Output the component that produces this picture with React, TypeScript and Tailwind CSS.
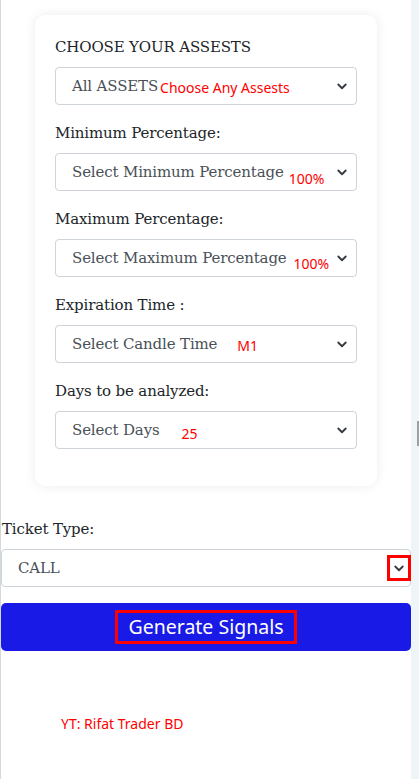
import React from 'react';

type Field = { label: string; value: string; note: string; noteClass: string };

const fields: Field[] = [
    { label: 'CHOOSE YOUR ASSESTS', value: 'All ASSETS', note: 'Choose Any Assests', noteClass: 'ml-[2px] translate-y-[1px]' },
    { label: 'Minimum Percentage:', value: 'Select Minimum Percentage', note: '100%', noteClass: 'ml-[5px] translate-y-[6px]' },
    { label: 'Maximum Percentage:', value: 'Select Maximum Percentage', note: '100%', noteClass: 'ml-[7px] translate-y-[5px]' },
    { label: 'Expiration Time :', value: 'Select Candle Time', note: 'M1', noteClass: 'ml-[20px] translate-y-[1px]' },
    { label: 'Days to be analyzed:', value: 'Select Days', note: '25', noteClass: 'ml-[22px] translate-y-[3px]' },
];

const Chevron: React.FC = () => (
    <svg width="12" height="12" viewBox="0 0 16 16" fill="none" stroke="#343a40" strokeWidth="2.4" strokeLinecap="round" strokeLinejoin="round">
        <path d="M3 6l5 5 5-5" />
    </svg>
);

const SelectBox: React.FC<{ value: string; note?: string; noteClass?: string; boxed?: boolean }> = (props) => (
    <div className={`flex h-[38px] items-center rounded-[4px] border border-[#ced4da] bg-white pl-[16px] ${props.boxed ? 'pr-0' : 'pr-[7px]'}`}>
        <span className="whitespace-nowrap text-[#495057]">{props.value}</span>
        {!!props.note && (
            <span className={`whitespace-nowrap font-['Noto_Sans',sans-serif] text-[14px] tracking-normal text-[#ff0000] ${props.noteClass ?? ''}`}>
                {props.note}
            </span>
        )}
        <div className="ml-auto flex shrink-0 items-center">
            {props.boxed ? (
                <div className="-mr-[1px] flex h-[26px] w-[24px] items-center justify-center border-[3px] border-[#ff0000]">
                    <Chevron />
                </div>
            ) : (
                <div className="flex w-[14px] items-center justify-center">
                    <Chevron />
                </div>
            )}
        </div>
    </div>
);

export default function App(): React.ReactElement {
    return (
        <div className="flex min-h-[779px] w-[419px] bg-[#edf5f8] font-['DejaVu_Serif',serif] text-[15px] tracking-[-0.15px] text-[#212529]">
            <div className="w-[411px] border-l border-[#d3dadd] bg-white">
                <div className="mx-[34px] mt-[15px] w-[342px] rounded-[10px] bg-white px-[20px] pt-[22px] pb-[37px] shadow-[0_0_12px_rgba(0,0,0,0.08)]">
                    {fields.map((f) => (
                        <div key={f.label} className="mb-[18px] last:mb-0">
                            <div className="mb-[10px] h-[20px] leading-[20px]">{f.label}</div>
                            <SelectBox value={f.value} note={f.note} noteClass={f.noteClass} />
                        </div>
                    ))}
                </div>
                <div className="mt-[33px]">
                    <div className="mb-[10px] h-[20px] pl-[1px] leading-[20px]">Ticket Type:</div>
                    <SelectBox value="CALL" boxed />
                    <button className="mt-[16px] flex h-[48px] w-full items-center justify-center rounded-[5px] bg-[#1a1ae6]">
                        <span className="flex h-[34px] w-[182px] items-center justify-center border-[3px] border-[#ff0000] font-['Noto_Sans',sans-serif] text-[19.5px] tracking-normal text-white">
                            Generate Signals
                        </span>
                    </button>
                </div>
                <div className="mt-[62px] pl-[60px] font-['Noto_Sans',sans-serif] text-[14px] tracking-normal text-[#ff0000]">
                    YT: Rifat Trader BD
                </div>
            </div>
            <div className="relative w-[8px]">
                <div className="absolute top-[421px] left-[6px] h-[25px] w-[2px] bg-[#9aa0a3]" />
            </div>
        </div>
    );
}
